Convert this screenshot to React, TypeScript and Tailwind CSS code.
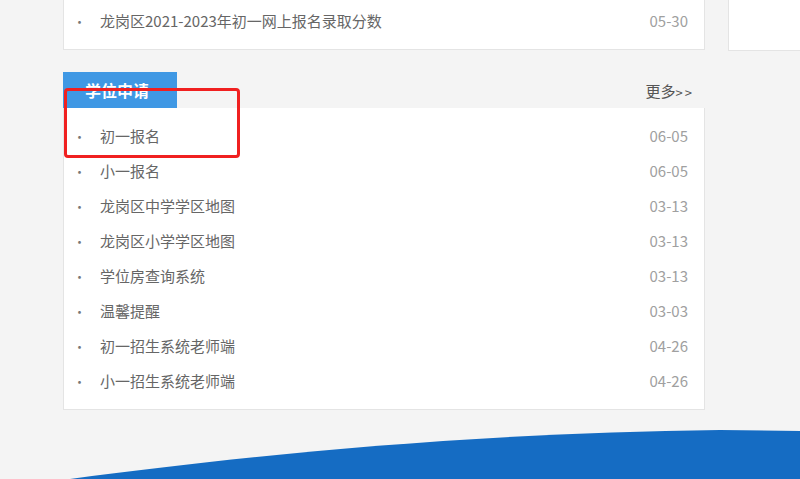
import React from "react";

const items: [string, string][] = [
  ["初一报名", "06-05"],
  ["小一报名", "06-05"],
  ["龙岗区中学学区地图", "03-13"],
  ["龙岗区小学学区地图", "03-13"],
  ["学位房查询系统", "03-13"],
  ["温馨提醒", "03-03"],
  ["初一招生系统老师端", "04-26"],
  ["小一招生系统老师端", "04-26"],
];

function Row({ title, date }: { title: string; date: string }) {
  return (
    <div className="flex h-[35px] items-center pl-[9px] pr-[16px]">
      <span className="w-[27px] text-[13px] text-[#777]">·</span>
      <span className="flex-1 text-[15px] text-[#666]">{title}</span>
      <span className="text-[15px] text-[#a0a0a0]">{date}</span>
    </div>
  );
}

export default function App() {
  return (
    <div
      className="relative h-[479px] w-[800px] overflow-hidden bg-[#f4f4f4]"
      style={{ fontFamily: '"Noto Sans CJK SC", "Noto Sans", sans-serif' }}
    >
      <div className="flex gap-[23px] pl-[63px]">
        <div className="w-[642px]">
          <div className="border border-t-0 border-[#e4e4e4] bg-white pt-[4px] pb-[10px]">
            <Row title="龙岗区2021-2023年初一网上报名录取分数" date="05-30" />
          </div>
          <div className="mt-[22px] flex h-[36px] items-stretch justify-between">
            <div className="flex w-[114px] items-center bg-[#3f98e4] pl-[22px] text-[16px] font-bold text-white">
              学位申请
            </div>
            <div className="flex items-end pb-[6px] pr-[11px] text-[15px] text-[#555]">
              更多<span className="text-[13px] tracking-[2px]">&gt;&gt;</span>
            </div>
          </div>
          <div className="border border-t-0 border-[#e4e4e4] bg-white pt-[11px] pb-[10px]">
            {items.map(([t, d]) => (
              <Row key={t} title={t} date={d} />
            ))}
          </div>
        </div>
        <div className="h-[51px] flex-1 border border-t-0 border-r-0 border-[#e4e4e4] bg-white" />
      </div>
      <div className="pointer-events-none absolute left-[64px] top-[88px] h-[70px] w-[176px] rounded-[4px] border-[3px] border-[#f02020]" />
      <svg className="absolute bottom-0 left-0" width="800" height="70" viewBox="0 0 800 70">
        <path d="M70 70 C 250 46, 470 24, 720 21 L800 22 L800 70 Z" fill="#156cc3" />
      </svg>
    </div>
  );
}
